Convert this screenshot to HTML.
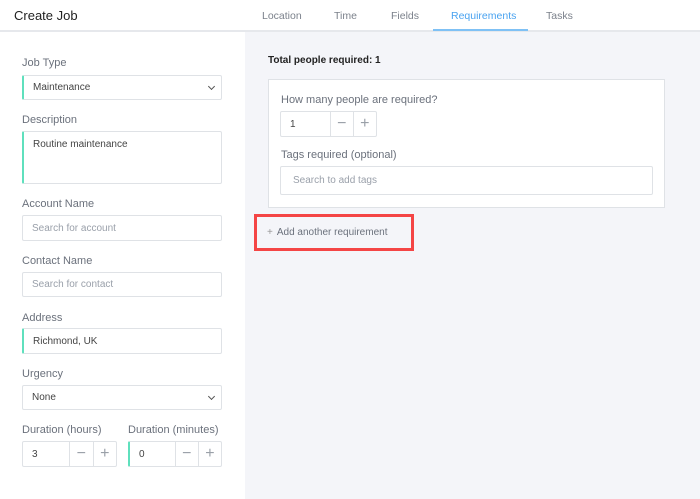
<!DOCTYPE html>
<html><head><style>
*{box-sizing:border-box;margin:0;padding:0}
body{width:700px;height:499px;overflow:hidden;font-family:"Liberation Sans",sans-serif;background:#f4f5f9;position:relative;color:#333}
.abs{position:absolute}
.left{left:0;top:0;width:245px;height:499px;background:#fff}
.hdr{left:0;top:0;width:245px;height:32px;background:#fff;border-bottom:2px solid #e6e8ec}
.rhdr{left:245px;top:0;width:455px;height:32px;background:#fff;border-bottom:2px solid #e6e8ec}
.lbl{font-size:11px;color:#6b717c}
.inp{background:#fff;border:1px solid #dfe2e6;border-radius:2px;font-size:10px;color:#444;padding-left:9px;display:flex;align-items:center}
.acc{border-left:2px solid #5fe0bd}
.ph{color:#9aa0aa}
.tab{font-size:10.5px;color:#7b818b;top:10px}
.st{display:flex;background:#fff;border:1px solid #dfe2e6;border-radius:2px}
.st div{display:flex;align-items:center;justify-content:center;border-left:1px solid #dfe2e6;color:#9aa0a8;font-size:16px;font-weight:300}
.st div:first-child{border-left:none;justify-content:flex-start;padding-left:9px;font-size:10px;color:#444}
.chev{position:absolute;right:7px;top:8px;width:5px;height:5px;border-right:1px solid #555;border-bottom:1px solid #555;transform:rotate(45deg)}
</style></head><body>
<div class="abs left"></div>
<div class="abs hdr"></div>
<div class="abs rhdr"></div>
<div class="abs" style="left:14px;top:8px;font-size:13px;color:#222">Create Job</div>
<div class="abs tab" style="left:262px">Location</div>
<div class="abs tab" style="left:334px">Time</div>
<div class="abs tab" style="left:391px">Fields</div>
<div class="abs tab" style="left:451px;color:#4aa3f0">Requirements</div>
<div class="abs tab" style="left:546px">Tasks</div>
<div class="abs" style="left:433px;top:29px;width:95px;height:2px;background:#7fc1f5"></div>

<div class="abs lbl" style="left:22px;top:57px">Job Type</div>
<div class="abs inp acc" style="left:22px;top:75px;width:200px;height:25px">Maintenance<span class="chev"></span></div>
<div class="abs lbl" style="left:22px;top:114px">Description</div>
<div class="abs inp acc" style="left:22px;top:131px;width:200px;height:53px;align-items:flex-start;padding-top:7px">Routine maintenance</div>
<div class="abs lbl" style="left:22px;top:198px">Account Name</div>
<div class="abs inp ph" style="left:22px;top:215px;width:200px;height:26px">Search for account</div>
<div class="abs lbl" style="left:22px;top:255px">Contact Name</div>
<div class="abs inp ph" style="left:22px;top:272px;width:200px;height:25px">Search for contact</div>
<div class="abs lbl" style="left:22px;top:312px">Address</div>
<div class="abs inp acc" style="left:22px;top:328px;width:200px;height:26px">Richmond, UK</div>
<div class="abs lbl" style="left:22px;top:368px">Urgency</div>
<div class="abs inp" style="left:22px;top:385px;width:200px;height:25px">None<span class="chev"></span></div>
<div class="abs lbl" style="left:22px;top:424px">Duration (hours)</div>
<div class="abs lbl" style="left:128px;top:424px">Duration (minutes)</div>
<div class="abs st" style="left:22px;top:441px;width:95px;height:26px"><div style="width:47px">3</div><div style="width:24px">−</div><div style="width:24px">+</div></div>
<div class="abs st" style="left:128px;top:441px;width:94px;height:26px;border-left:2px solid #5fe0bd"><div style="width:46px">0</div><div style="width:24px">−</div><div style="width:24px">+</div></div>

<div class="abs" style="left:268px;top:55px;font-size:10px;font-weight:bold;color:#222">Total people required: 1</div>
<div class="abs" style="left:268px;top:79px;width:397px;height:129px;background:#fff;border:1px solid #dfe2e6"></div>
<div class="abs lbl" style="left:281px;top:94px">How many people are required?</div>
<div class="abs st" style="left:280px;top:111px;width:97px;height:26px"><div style="width:50px">1</div><div style="width:23px">−</div><div style="width:24px">+</div></div>
<div class="abs lbl" style="left:281px;top:149px">Tags required (optional)</div>
<div class="abs inp ph" style="left:280px;top:166px;width:373px;height:29px;padding-left:12px">Search to add tags</div>
<div class="abs" style="left:254px;top:214px;width:160px;height:37px;border:3px solid #f44545"></div>
<div class="abs" style="left:267px;top:227px;font-size:10px;color:#6b717c"><span style="color:#999;margin-right:4px">+</span>Add another requirement</div>
</body></html>
